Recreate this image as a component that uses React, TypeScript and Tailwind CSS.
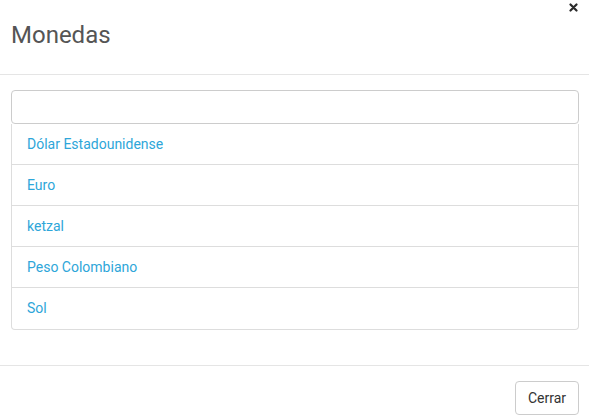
import React from 'react';

const monedas = ['Dólar Estadounidense', 'Euro', 'ketzal', 'Peso Colombiano', 'Sol'];

const App: React.FC = () => {
  return (
    <div className="w-[589px] h-[415px] bg-white overflow-hidden font-['Roboto',sans-serif]">
      {/* header */}
      <div className="relative h-[75px] border-b border-[#e5e5e5] pl-[11px] pr-[10px] pt-[18px]">
        <button className="absolute right-[11px] top-[3px] w-[9px] h-[9px] flex items-center justify-center">
          <svg width="9" height="9" viewBox="0 0 9 9">
            <path d="M1.5 1.5 L7.5 7.5 M7.5 1.5 L1.5 7.5" stroke="#2b2b2b" strokeWidth="2.2" strokeLinecap="round" />
          </svg>
        </button>
        <h4 className="text-[24px] leading-[34px] text-[#555555] font-normal">Monedas</h4>
      </div>

      {/* body */}
      <div className="h-[290px] pl-[11px] pr-[10px] pt-[15px]">
        <input
          type="text"
          className="block w-full h-[34px] border border-[#cccccc] rounded-[4px] px-3 text-sm outline-none"
        />
        <ul className="border border-[#dddddd] border-t-0 rounded-b-[4px]">
          {monedas.map((m, i) => (
            <li
              key={m}
              className={`h-[41px] px-[15px] flex items-center text-[14px] text-[#2ea6d9] ${i < monedas.length - 1 ? 'border-b border-[#dddddd]' : ''}`}
            >
              {m}
            </li>
          ))}
        </ul>
      </div>

      {/* footer */}
      <div className="border-t border-[#e5e5e5] pl-[11px] pr-[10px] pt-[15px] flex justify-end">
        <button className="h-[34px] px-3 border border-[#cccccc] rounded-[4px] text-[14px] text-[#333333] bg-white">
          Cerrar
        </button>
      </div>
    </div>
  );
};

export default App;
